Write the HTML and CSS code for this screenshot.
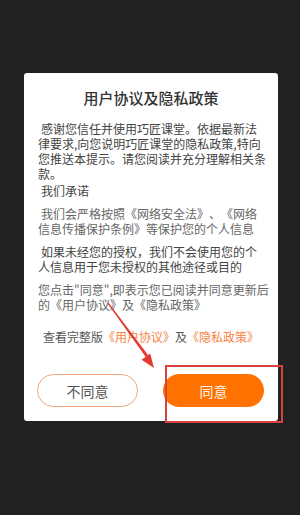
FILE: index.html
```html
<!DOCTYPE html>
<html lang="zh-CN">
<head>
    <meta charset="UTF-8">
    <title>用户协议及隐私政策</title>
    <link rel="stylesheet" href="styles.css">
</head>
<body>

<div class="screen">
    <div class="dialog">
        <h2 class="dialog-title">用户协议及隐私政策</h2>
        <div class="dialog-body">
            <p class="para dark indent first">感谢您信任并使用巧匠课堂。依据最新法<br>律要求,向您说明巧匠课堂的隐私政策,特向<br>您推送本提示。请您阅读并充分理解相关条<br>款。</p>
            <p class="para dark indent tight">我们承诺</p>
            <p class="para indent">我们会严格按照《网络安全法》、《网络<br>信息传播保护条例》等保护您的个人信息</p>
            <p class="para dark indent">如果未经您的授权，我们不会使用您的个<br>人信息用于您未授权的其他途径或目的</p>
            <p class="para">您点击"同意",即表示您已阅读并同意更新后<br>的《用户协议》及《隐私政策》</p>
            <p class="para full-link">查看完整版<a href="#">《用户协议》</a>及<a href="#">《隐私政策》</a></p>
        </div>
        <div class="dialog-actions">
            <button class="btn btn-outline">不同意</button>
            <button class="btn btn-fill">同意</button>
        </div>
    </div>

    <!-- annotation drawn over the screenshot -->
    <div class="mark-box"></div>
    <svg class="mark-arrow" width="300" height="515" viewBox="0 0 300 515">
        <polygon points="107.5,303.5 108.6,302.8 148.2,355.2 145.8,357" fill="#e23b33"/>
        <polygon points="154,368 141.5,359.8 150.2,353.5" fill="#e23b33"/>
    </svg>
</div>

</body>
</html>
```

FILE: styles.css
```css
body {
    margin: 0;
    background: #222222;
    font-family: "Noto Sans CJK SC", "Noto Sans", sans-serif;
}
.screen {
    position: relative;
    width: 300px;
    height: 515px;
    padding-top: 73px;
    box-sizing: border-box;
}
.dialog {
    width: 254px;
    height: 348px;
    margin-left: 24px;
    background: #fff;
    border-radius: 3px;
    box-sizing: border-box;
    padding: 15px 0 14px;
}
.dialog-title {
    margin: 0;
    font-size: 15px;
    line-height: 20px;
    font-weight: 500;
    text-align: center;
    color: #333;
}
.dialog-body {
    padding: 0 0 0 14px;
}
.para {
    margin: 8px 0 0;
    font-size: 12px;
    line-height: 15px;
    color: #666;
    text-spacing-trim: space-all;
}
.para.dark {
    color: #444;
}
.para.first {
    margin-top: 13px;
}
.para.tight {
    margin-top: 2px;
}
.indent {
    text-indent: 3px;
}
.full-link {
    margin-top: 17px;
    padding-right: 14px;
    text-align: center;
    color: #555;
}
.full-link a {
    color: #f7833f;
    text-decoration: none;
}
.dialog-actions {
    display: flex;
    justify-content: space-between;
    padding: 0 14px 0 13px;
    margin-top: 30px;
}
.btn {
    width: 101px;
    height: 33px;
    border-radius: 17px;
    font-family: inherit;
    font-size: 14px;
    padding: 0;
}
.btn-outline {
    background: #fff;
    border: 1px solid #f2a577;
    color: #555;
}
.btn-fill {
    background: #ff7100;
    border: none;
    color: #fff4ea;
}
.mark-box {
    position: absolute;
    left: 165px;
    top: 365px;
    width: 118px;
    height: 58px;
    border: 2px solid #d8413c;
    box-sizing: border-box;
}
.mark-arrow {
    position: absolute;
    left: 0;
    top: 0;
}
```
